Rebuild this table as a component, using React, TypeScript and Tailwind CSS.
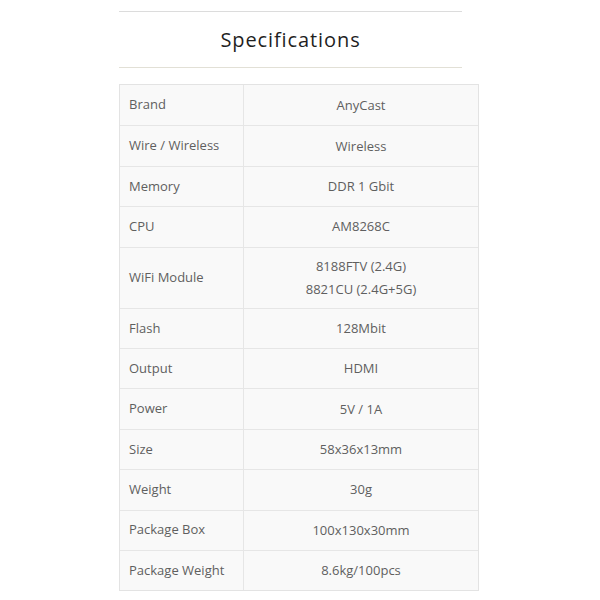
const specs: { label: string; value: string[] }[] = [
  { label: 'Brand', value: ['AnyCast'] },
  { label: 'Wire / Wireless', value: ['Wireless'] },
  { label: 'Memory', value: ['DDR 1 Gbit'] },
  { label: 'CPU', value: ['AM8268C'] },
  { label: 'WiFi Module', value: ['8188FTV (2.4G)', '8821CU (2.4G+5G)'] },
  { label: 'Flash', value: ['128Mbit'] },
  { label: 'Output', value: ['HDMI'] },
  { label: 'Power', value: ['5V / 1A'] },
  { label: 'Size', value: ['58x36x13mm'] },
  { label: 'Weight', value: ['30g'] },
  { label: 'Package Box', value: ['100x130x30mm'] },
  { label: 'Package Weight', value: ['8.6kg/100pcs'] },
];

export default function App() {
  return (
    <div
      className="h-[600px] w-[600px] bg-white pt-[11px] pl-[119px]"
      style={{ fontFamily: '"Open Sans", "Liberation Sans", sans-serif' }}
    >
      {/* ── Heading ── */}
      <div className="w-[343px]">
        <div className="h-px bg-[#dcdcdc]" />
        <h2 className="flex h-[55px] items-center justify-center text-[20px] tracking-[0.045em] text-[#1f1f1f]">
          Specifications
        </h2>
        <div className="h-px bg-[#e2e0d6]" />
      </div>

      {/* ── Table ── */}
      <div className="mt-4 w-[360px] border border-[#e3e3e3] bg-[#f9f9f9] text-[13px] text-[#5f5f5f]">
        {specs.map((row, i) => (
          <div
            key={row.label}
            className={`flex ${i > 0 ? 'border-t border-[#e6e6e6]' : ''} ${
              row.value.length > 1 ? 'h-[61px]' : 'h-[40.4px]'
            }`}
          >
            <div className="flex w-[124px] items-center border-r border-[#e6e6e6] pl-[9px]">
              {row.label}
            </div>
            <div className="flex flex-1 flex-col items-center justify-center leading-[23px]">
              {row.value.map((v) => (
                <span key={v}>{v}</span>
              ))}
            </div>
          </div>
        ))}
      </div>
    </div>
  );
}
